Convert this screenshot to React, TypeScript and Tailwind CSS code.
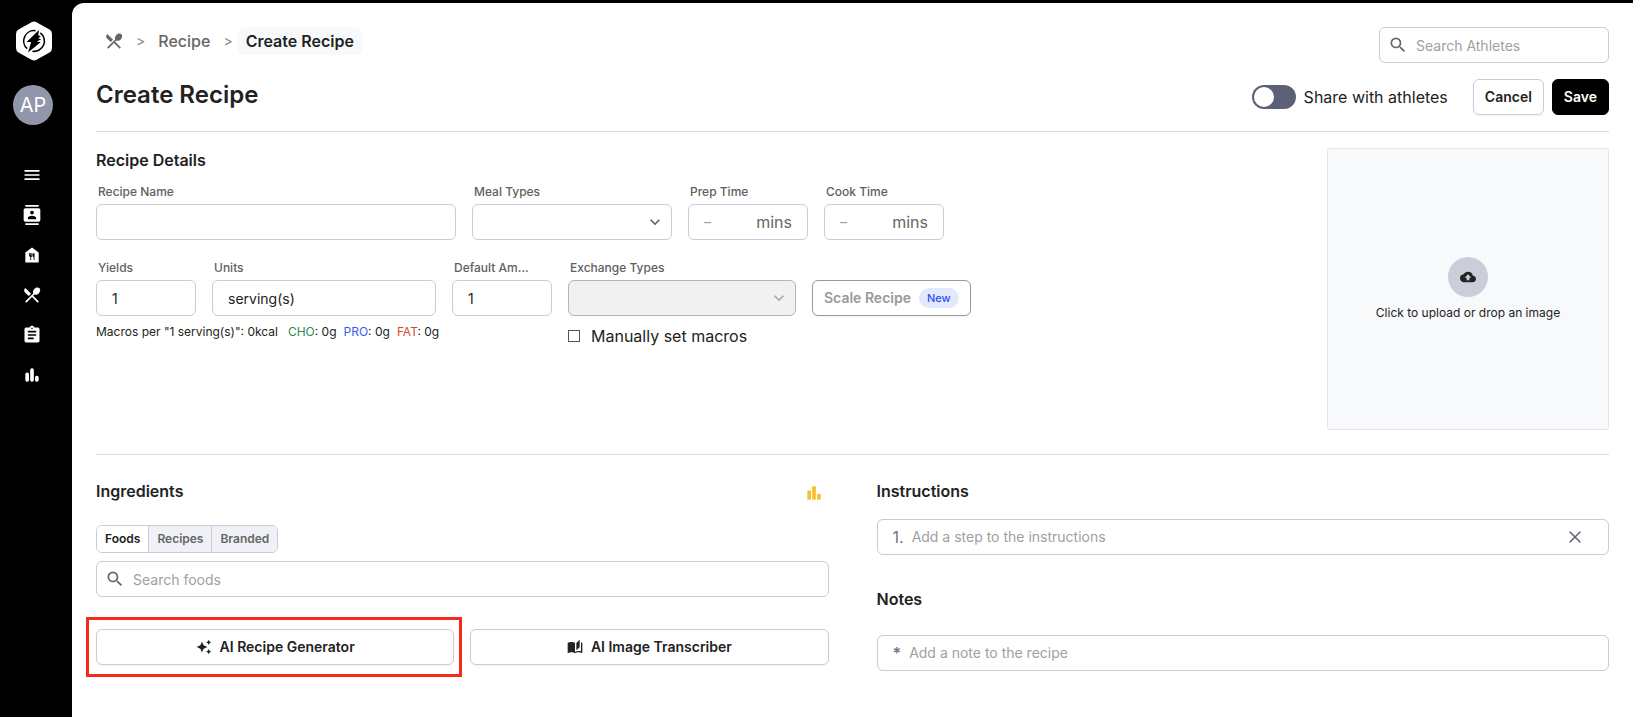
import { useState } from "react";
import type { ReactNode } from "react";
import clsx from "clsx";
import {
  MdAssignment,
  MdAutoAwesome,
  MdAutoStories,
  MdCloudUpload,
  MdContacts,
  MdExpandMore,
  MdFoodBank,
  MdMenu,
  MdRestaurantMenu,
  MdSearch,
} from "react-icons/md";
import { X } from "lucide-react";

const FIELD = "h-9 w-full rounded-md border border-[#c9ccd8] bg-white text-sm text-[#222] outline-none placeholder:text-[#a0a0a0]";
const BUTTON = "flex h-9 items-center justify-center rounded-md border text-sm font-semibold";

const TABS = ["Foods", "Recipes", "Branded"];

const MACROS = [
  { name: "CHO", value: "0g", color: "text-[#2e8b4f]" },
  { name: "PRO", value: "0g", color: "text-[#3b5bf5]" },
  { name: "FAT", value: "0g", color: "text-[#d9482b]" },
];

function Logo() {
  return (
    <svg width="36" height="40" viewBox="0 0 36 40" role="img" aria-label="Home">
      <path d="M15.5 1.2Q18 -.4 20.500 1.200L33.500 8.600Q36 10 36 13V27Q36 30 33.500 31.400L20.500 38.800Q18 40.400 15.500 38.800L2.500 31.400Q0 30 0 27V13Q0 10 2.500 8.600Z" fill="#fff" />
      <path d="M19.500 9.700A10.300 10.300 0 0 0 11.200 27.600M24.300 11.800A10.300 10.300 0 0 1 16.500 30.200" fill="none" stroke="#000" strokeWidth="1.600" />
      <path d="M23 9L10.600 21H15.200L12 31.500L24.600 21.200L21 20.400L25.200 18.200L22.200 17.200L24.800 15.200L22.200 14.200Z" fill="#000" />
    </svg>
  );
}

function Bars({ className, rounded }: { className?: string; rounded?: boolean }) {
  const r = rounded ? 2 : 0;
  return (
    <svg className={className} width="20" height="20" viewBox="0 0 24 24" fill="currentColor" aria-hidden="true">
      <rect x="4" y="9" width="4.400" height="11" rx={r} />
      <rect x="9.800" y="4" width="4.400" height="16" rx={r} />
      <rect x="15.600" y="13" width="4.400" height="7" rx={r} />
    </svg>
  );
}

function Field({ id, label, className, children }: { id: string; label: string; className: string; children: ReactNode }) {
  return (
    <div className={className}>
      <label htmlFor={id} className="mb-1 block pl-0.5 text-xs leading-4 font-medium whitespace-nowrap text-[#606060]">
        {label}
      </label>
      {children}
    </div>
  );
}

function SelectBox({ id, disabled }: { id: string; disabled?: boolean }) {
  return (
    <div className="relative">
      <select
        id={id}
        disabled={disabled}
        className={clsx(
          "h-9 w-full appearance-none rounded-md border px-4 text-sm outline-none",
          disabled ? "border-[#b5b5b5] bg-[#f1f1f1]" : "border-[#c9ccd8] bg-white"
        )}
      >
        <option value=""></option>
      </select>
      <MdExpandMore
        size={20}
        className={clsx("pointer-events-none absolute top-2 right-[7px]", disabled ? "text-[#a8a8a8]" : "text-[#666]")}
      />
    </div>
  );
}

function TimeBox({ id }: { id: string }) {
  return (
    <div className={clsx(FIELD, "flex items-center px-[15px]")}>
      <input id={id} placeholder="–" className="w-full min-w-0 text-sm outline-none placeholder:text-[#a0a0a0]" />
      <span className="text-base text-[#666]">mins</span>
    </div>
  );
}

function Sidebar() {
  return (
    <nav className="flex w-18 shrink-0 flex-col items-center bg-black pt-[21px] text-white">
      <a href="#home" className="pr-1">
        <Logo />
      </a>
      <button className="mt-6 mr-1.5 flex size-10 items-center justify-center rounded-full bg-[#9296aa] text-xl">AP</button>
      <div className="mt-10 mr-2 flex flex-col gap-5">
        <button aria-label="Menu">
          <MdMenu size={20} className="block" />
        </button>
        <a href="#athletes" aria-label="Athletes"><MdContacts size={20} /></a>
        <a href="#foods" aria-label="Foods"><MdFoodBank size={20} /></a>
        <a href="#recipes" aria-label="Recipes"><MdRestaurantMenu size={20} /></a>
        <a href="#plans" aria-label="Plans"><MdAssignment size={20} /></a>
        <a href="#reports" aria-label="Reports"><Bars rounded /></a>
      </div>
    </nav>
  );
}

function Header() {
  const [shared, setShared] = useState(false);

  return (
    <header className="border-b border-[#dcdcdf] pb-4">
      <div className="flex h-9 items-start justify-between">
        <div className="flex h-7 items-center pl-2 text-base font-medium text-[#666]">
          <a href="#recipes" aria-label="Recipes"><MdRestaurantMenu size={20} /></a>
          <span className="ml-3 text-sm font-normal text-[#8a8a8a]">&gt;</span>
          <a href="#recipe" className="ml-[13px]">Recipe</a>
          <span className="ml-[13px] text-sm font-normal text-[#8a8a8a]">&gt;</span>
          <span className="ml-[5px] rounded-md bg-[#f8f9fb] px-2 py-0.5 font-semibold text-[#222]">Create Recipe</span>
        </div>
        <div className="relative w-[230px]">
          <MdSearch size={20} className="absolute top-2 left-[9px] text-[#666]" />
          <input aria-label="Search Athletes" placeholder="Search Athletes" className={clsx(FIELD, "pr-3 pl-9")} />
        </div>
      </div>

      <div className="mt-4 flex items-center justify-between">
        <h1 className="pb-1 text-2xl leading-8 font-semibold">Create Recipe</h1>
        <div className="flex items-center">
          <input
            id="share"
            type="checkbox"
            role="switch"
            checked={shared}
            onChange={(e) => setShared(e.target.checked)}
            className="h-6 w-11 appearance-none rounded-full bg-[#5c6178] p-0.5 before:block before:size-5 before:rounded-full before:bg-white checked:before:translate-x-5"
          />
          <label htmlFor="share" className="ml-2 text-base">Share with athletes</label>
          <button className={clsx(BUTTON, "ml-[25px] border-[#c9ccd8] px-[11px] shadow-xs")}>Cancel</button>
          <button className={clsx(BUTTON, "ml-2 border-black bg-black px-[11px] text-white")}>Save</button>
        </div>
      </div>
    </header>
  );
}

function RecipeDetails() {
  return (
    <section className="flex items-start justify-between border-b border-[#dcdcdf] pt-4 pb-6">
      <div>
        <h2 className="text-base leading-6 font-semibold">Recipe Details</h2>
        <div className="mt-3 flex gap-4">
          <Field id="name" label="Recipe Name" className="w-90">
            <input id="name" className={clsx(FIELD, "px-[15px]")} />
          </Field>
          <Field id="meal" label="Meal Types" className="w-50">
            <SelectBox id="meal" />
          </Field>
          <Field id="prep" label="Prep Time" className="w-30">
            <TimeBox id="prep" />
          </Field>
          <Field id="cook" label="Cook Time" className="w-30">
            <TimeBox id="cook" />
          </Field>
        </div>

        <div className="mt-5 flex gap-4">
          <div>
            <div className="flex gap-4">
              <Field id="yields" label="Yields" className="w-25">
                <input id="yields" defaultValue="1" className={clsx(FIELD, "px-[15px]")} />
              </Field>
              <Field id="units" label="Units" className="w-56">
                <input id="units" defaultValue="serving(s)" className={clsx(FIELD, "px-[15px]")} />
              </Field>
              <Field id="amount" label="Default Am..." className="w-25">
                <input id="amount" defaultValue="1" className={clsx(FIELD, "px-[15px]")} />
              </Field>
            </div>
            <p className="mt-2 flex gap-[7px] text-xs leading-4">
              <span className="mr-[3px]">Macros per "1 serving(s)": 0kcal</span>
              {MACROS.map((m) => (
                <span key={m.name}>
                  <span className={m.color}>{m.name}</span>: {m.value}
                </span>
              ))}
            </p>
          </div>
          <div>
            <Field id="exchange" label="Exchange Types" className="w-57">
              <SelectBox id="exchange" disabled />
            </Field>
            <label className="mt-2 flex items-center text-base leading-6">
              <input type="checkbox" className="mr-[11px] size-3 appearance-none border border-[#555] checked:bg-[#555]" />
              Manually set macros
            </label>
          </div>
          <button disabled className={clsx(BUTTON, "mt-5 gap-2 border-[#999] px-[11px] font-medium text-[#999] shadow-xs")}>
            Scale Recipe
            <span className="rounded-full bg-[#e3e9fd] px-2 py-0.5 text-[11px] leading-4 font-medium text-[#2f4df0]">New</span>
          </button>
        </div>
      </div>

      <button className="flex size-[282px] shrink-0 flex-col items-center justify-center rounded-xs border border-[#e3e5eb] bg-[#f8f9fb] text-xs leading-4">
        <span className="mb-2 flex size-10 items-center justify-center rounded-full bg-[#cbced9]">
          <MdCloudUpload size={16} />
        </span>
        Click to upload or drop an image
      </button>
    </section>
  );
}

function Ingredients() {
  const [tab, setTab] = useState("Foods");

  return (
    <section>
      <div className="flex items-center justify-between">
        <h2 className="text-base leading-6 font-semibold">Ingredients</h2>
        <button aria-label="Nutrition breakdown" className="mr-[5px] pt-1 text-[#f5c02c]">
          <Bars />
        </button>
      </div>
      <div className="mt-[22px] flex h-7 w-fit divide-x divide-[#c9ccd8] overflow-hidden rounded-md border border-[#c9ccd8]">
        {TABS.map((name) => (
          <button
            key={name}
            onClick={() => setTab(name)}
            className={clsx("px-2 text-xs font-semibold", tab === name ? "bg-white" : "bg-[#f0f1f6] text-[#666]")}
          >
            {name}
          </button>
        ))}
      </div>
      <div className="relative mt-2">
        <MdSearch size={20} className="absolute top-2 left-[9px] text-[#666]" />
        <input aria-label="Search foods" placeholder="Search foods" className={clsx(FIELD, "pr-3 pl-9")} />
      </div>
      <div className="mt-8 grid grid-cols-2 gap-4">
        <div className="relative">
          {/* highlight frame around the generator */}
          <div className="pointer-events-none absolute -inset-y-3 -right-2 -left-2.5 border-3 border-[#f32a1c]" />
          <button className={clsx(BUTTON, "w-full gap-2 border-[#c9ccd8] shadow-xs")}>
            <MdAutoAwesome size={16} />
            AI Recipe Generator
          </button>
        </div>
        <button className={clsx(BUTTON, "gap-2 border-[#c9ccd8] shadow-xs")}>
          <MdAutoStories size={16} />
          AI Image Transcriber
        </button>
      </div>
    </section>
  );
}

function Instructions() {
  return (
    <section>
      <h2 className="text-base leading-6 font-semibold">Instructions</h2>
      <div className={clsx(FIELD, "mt-4 flex items-center pr-[23px] pl-[15px]")}>
        <span className="mr-2 text-base text-[#777]">1.</span>
        <input
          aria-label="Instruction step"
          placeholder="Add a step to the instructions"
          className="min-w-0 flex-1 text-sm outline-none placeholder:text-[#a0a0a0]"
        />
        <button aria-label="Remove step" className="text-[#5c6178]">
          <X size={20} strokeWidth={1.75} />
        </button>
      </div>

      <h2 className="mt-8 text-base leading-6 font-semibold">Notes</h2>
      <div className={clsx(FIELD, "mt-6 flex items-center px-[15px]")}>
        <span className="mr-2 text-base font-semibold text-[#777]">*</span>
        <input
          aria-label="Note"
          placeholder="Add a note to the recipe"
          className="min-w-0 flex-1 text-sm outline-none placeholder:text-[#a0a0a0]"
        />
      </div>
    </section>
  );
}

export default function App() {
  return (
    <div className="flex min-h-screen bg-black font-['Inter',sans-serif] text-[#222]">
      <Sidebar />
      <main className="mt-[3px] min-w-0 flex-1 rounded-tl-xl bg-white px-6 pt-6">
        <Header />
        <RecipeDetails />
        <div className="grid grid-cols-2 gap-12 pt-6 pb-10">
          <Ingredients />
          <Instructions />
        </div>
      </main>
    </div>
  );
}
